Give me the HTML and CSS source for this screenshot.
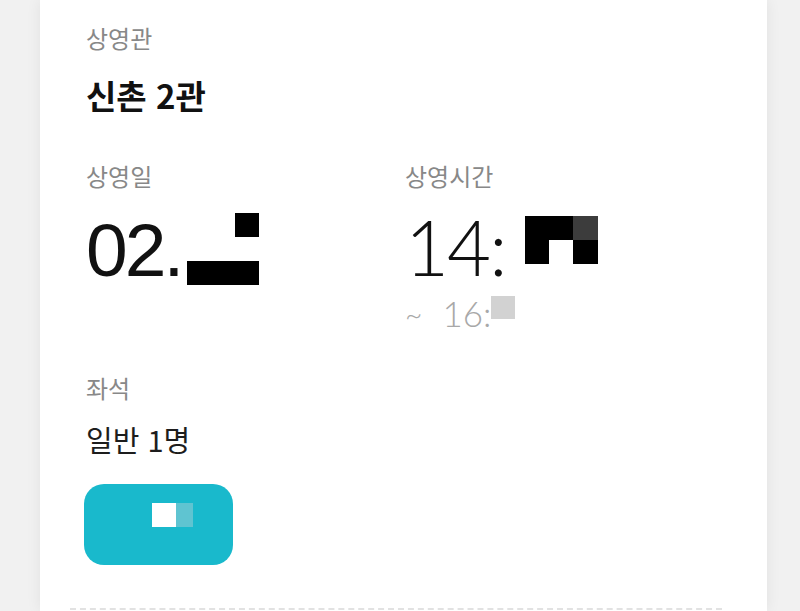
FILE: index.html
```html
<!DOCTYPE html>
<html lang="ko">
<head>
<meta charset="utf-8">
<title>예매 정보</title>
<link rel="stylesheet" href="styles.css">
</head>
<body>
<main class="card">
  <section class="block block-theater">
    <div class="label">상영관</div>
    <div class="value-bold">신촌 2관</div>
  </section>

  <section class="grid">
    <div class="col">
      <div class="label">상영일</div>
      <div class="big big-date">02.<svg class="mask mask-date" width="72" height="72" viewBox="0 0 72 72"><rect x="48" y="0" width="24" height="24" fill="#000"/><rect x="0" y="48" width="72" height="24" fill="#000"/></svg></div>
    </div>
    <div class="col">
      <div class="label">상영시간</div>
      <div class="big big-time">14:<svg class="mask mask-time" width="73" height="48" viewBox="0 0 73 48"><rect x="0" y="0" width="48" height="24" fill="#000"/><rect x="48" y="0" width="25" height="24" fill="#3c3c3c"/><rect x="0" y="24" width="24" height="24" fill="#000"/><rect x="48" y="24" width="25" height="24" fill="#000"/></svg></div>
      <div class="end-time"><span class="tilde">~</span>16:<span class="mask-end"></span></div>
    </div>
  </section>

  <section class="block block-seat">
    <div class="label">좌석</div>
    <div class="value">일반 1명</div>
  </section>

  <button class="action" type="button"><span class="px px-white"></span><span class="px px-teal"></span></button>

  <div class="divider"></div>
</main>
</body>
</html>
```
FILE: styles.css
```css
html, body {
  margin: 0;
  padding: 0;
}
body {
  width: 800px;
  height: 611px;
  overflow: hidden;
  background: #f1f1f1;
  font-family: "Noto Sans CJK KR", "Noto Sans", sans-serif;
}
.card {
  margin-left: 40px;
  width: 727px;
  height: 611px;
  box-sizing: border-box;
  background: #fff;
  padding: 26px 0 0 46px;
  box-shadow: 0 0 14px rgba(0, 0, 0, 0.07);
  display: flex;
  flex-direction: column;
}
.label {
  font-size: 24px;
  line-height: 24px;
  color: #888;
}
.value-bold {
  margin-top: 29px;
  font-size: 33px;
  line-height: 32px;
  font-weight: 700;
  color: #111;
}
.grid {
  margin-top: 53px;
  display: grid;
  grid-template-columns: 319px 1fr;
}
.col {
  display: flex;
  flex-direction: column;
}
.big {
  line-height: 1;
  color: #111;
  white-space: nowrap;
}
.big-date {
  margin-top: 25px;
  font-family: "Liberation Sans", Arial, sans-serif;
  font-size: 75px;
  letter-spacing: -3px;
}
.big-time {
  margin-top: 21px;
  font-family: Lato, "Liberation Sans", sans-serif;
  font-weight: 300;
  font-size: 76px;
  letter-spacing: -2px;
}
.mask {
  display: inline-block;
}
.mask-date {
  vertical-align: -9px;
  margin-left: 6px;
}
.mask-time {
  vertical-align: 12px;
  margin-left: 20px;
}
.end-time {
  margin-top: 11px;
  font-family: Lato, "Liberation Sans", sans-serif;
  font-weight: 300;
  font-size: 35px;
  line-height: 1;
  color: #a8a8a8;
}
.tilde {
  font-size: 30px;
  margin-right: 20px;
  vertical-align: 2px;
}
.mask-end {
  display: inline-block;
  width: 24px;
  height: 23px;
  background: #d2d2d2;
  vertical-align: 8px;
}
.block-seat {
  margin-top: 45px;
}
.value {
  margin-top: 25px;
  font-size: 29px;
  line-height: 29px;
  color: #1d1d1d;
}
.action {
  margin: 30px 0 0 -2px;
  width: 149px;
  height: 81px;
  border: none;
  border-radius: 20px;
  background: #19b9cc;
  padding: 19px 0 0 68px;
  display: flex;
  align-items: flex-start;
  cursor: pointer;
}
.px {
  display: block;
  height: 24px;
}
.px-white {
  width: 24px;
  background: #fff;
}
.px-teal {
  width: 17px;
  background: #5fc4d1;
}
.divider {
  margin: auto 0 1px -16px;
  width: 652px;
  height: 0;
  border-top: 2px dashed #e2e2e2;
}
```
